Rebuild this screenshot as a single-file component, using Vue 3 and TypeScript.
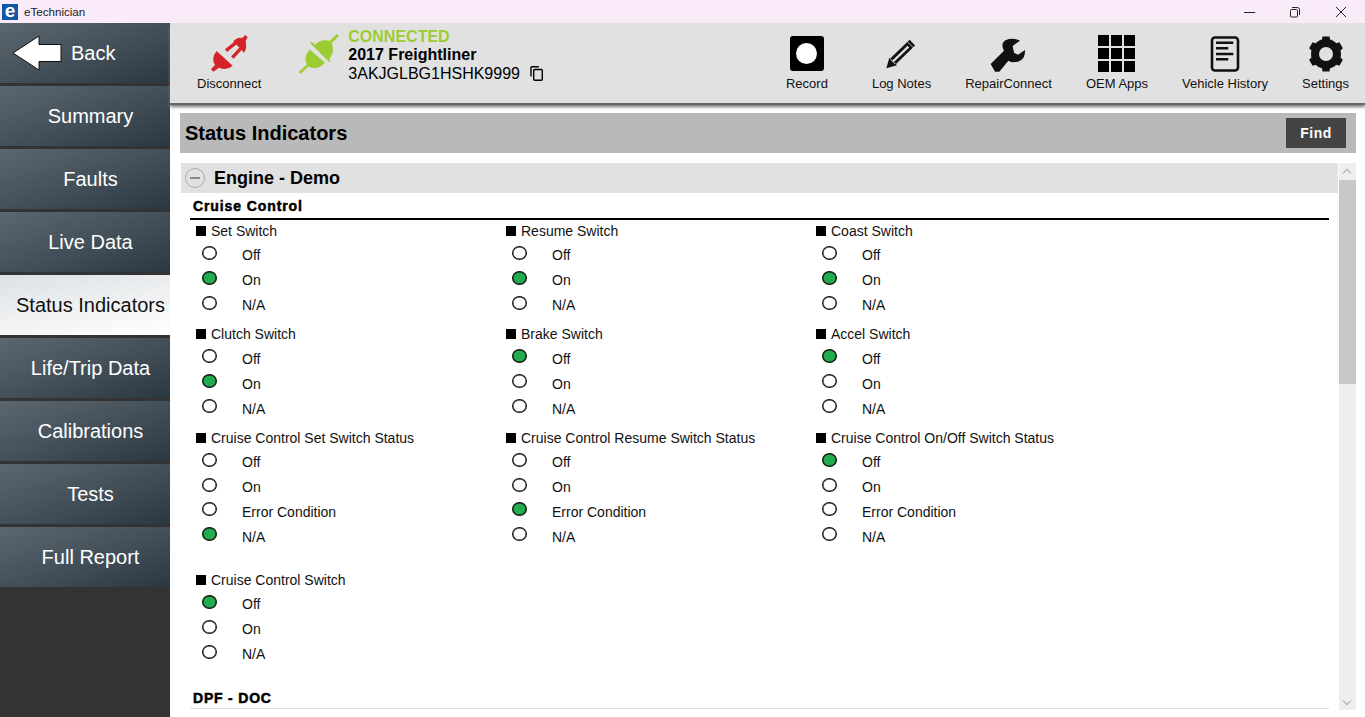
<template>
  <div class="app">
    <!-- Title bar -->
    <header class="titlebar">
      <span class="logo">e</span>
      <span class="app-name">eTechnician</span>
      <div class="win-controls">
        <svg width="12" height="12" viewBox="0 0 12 12"><path d="M1 6.500h11" stroke="#222" fill="none" /></svg>
        <svg width="12" height="12" viewBox="0 0 12 12">
          <path d="M3 1.500h5.500a2 2 0 0 1 2 2V9M1.500 4.500a1 1 0 0 1 1-1h5a1 1 0 0 1 1 1v5.500a1 1 0 0 1-1 1h-5a1 1 0 0 1-1-1z" stroke="#222" fill="none" />
        </svg>
        <svg width="12" height="12" viewBox="0 0 12 12"><path d="M1 1l10 10M11 1L1 11" stroke="#222" fill="none" /></svg>
      </div>
    </header>

    <div class="body">
      <!-- Side navigation -->
      <nav class="sidebar">
        <div class="nav-item back">
          <svg class="back-arrow" width="50" height="36" viewBox="0 0 50 36">
            <path d="M1 18L27 1v8.500h22v17H27V35z" fill="#fff" stroke="#111" stroke-width="1" />
          </svg>
          <span>Back</span>
        </div>
        <div v-for="item in navItems" :key="item" class="nav-item" :class="{ active: item === 'Status Indicators' }">
          {{ item }}
        </div>
      </nav>

      <main class="main">
        <!-- Toolbar -->
        <div class="toolbar">
          <div class="tool disconnect">
            <svg width="40" height="40" viewBox="627 96 120 120" fill="#d4242a">
              <path d="M700 124L732 158Q742 145 737 122L743 112L736 105L726 114Q712 110 700 124z" />
              <path d="M708 128L678 152M722 146L697 173" stroke="#d4242a" stroke-width="10" fill="none" />
              <path d="M650 153L698 197Q680 213 657 203L640 215L633 208L645 195Q632 175 650 153z" />
            </svg>
            <span class="tool-label">Disconnect</span>
          </div>

          <div class="connection">
            <svg class="plug" width="43" height="43" viewBox="320 10 130 130" fill="#9ccc32">
              <path d="M372 48Q392 26 418 34L441 13L447 19L425 41Q436 66 416 92z" />
              <path d="M362 38L420 96" stroke="#9ccc32" stroke-width="6" fill="none" />
              <path d="M358 60Q338 85 350 105L325 128L330 134L355 111Q380 125 405 100z" />
            </svg>
            <div class="conn-text">
              <div class="conn-state">CONNECTED</div>
              <div class="conn-vehicle">2017 Freightliner</div>
              <div class="conn-vin">
                3AKJGLBG1HSHK9999
                <svg class="copy-icon" width="14" height="15" viewBox="0 0 14 15" fill="none" stroke="#000" stroke-width="1.400">
                  <path d="M1 10.500V1.500a.8.800 0 0 1 .8-.8h7" />
                  <rect x="3.700" y="3.500" width="8.600" height="10.800" rx="1" />
                </svg>
              </div>
            </div>
          </div>

          <div class="tools-right">
            <div class="tool record-tool">
              <span class="record-box"><span class="record-dot"></span></span>
              <span class="tool-label">Record</span>
            </div>
            <div class="tool">
              <svg width="36" height="36" viewBox="11 18 108 108">
                <path d="M38 94L96 38" stroke="#111" stroke-width="24" fill="none" />
                <path d="M36 96L84 50" stroke="#e1e1e1" stroke-width="7" fill="none" />
                <path d="M18 115L27 83L50 106z" fill="#111" />
                <path d="M31 88L45 102" stroke="#e1e1e1" stroke-width="3" fill="none" />
                <path d="M78 32L101 55" stroke="#e1e1e1" stroke-width="2.500" fill="none" />
              </svg>
              <span class="tool-label">Log Notes</span>
            </div>
            <div class="tool">
              <svg width="40" height="36" viewBox="327 18 120 108" fill="#111">
                <path d="M332 102L372 62Q360 40 378 30Q398 22 420 32L398 48L402 68L414 74L435 60Q436 85 420 92Q400 102 385 92L358 125H345z" />
              </svg>
              <span class="tool-label">RepairConnect</span>
            </div>
            <div class="tool">
              <div class="apps-grid">
                <span v-for="n in 9" :key="n"></span>
              </div>
              <span class="tool-label">OEM Apps</span>
            </div>
            <div class="tool">
              <svg width="30" height="36" viewBox="0 0 30 36" fill="none" stroke="#111">
                <rect x="2" y="1.500" width="26" height="33" rx="3" stroke-width="2.600" />
                <path d="M6 6.700h17.300M6 12.300h12.300M6 18h17.300M6 23.300h12.300" stroke-width="2.400" />
              </svg>
              <span class="tool-label">Vehicle History</span>
            </div>
            <div class="tool settings-tool">
              <svg width="34" height="36" viewBox="0 0 34 36" fill="#111">
                <circle cx="17" cy="18" r="11" fill="none" stroke="#111" stroke-width="8" />
                <path v-for="a in gearTeeth" :key="a" d="M12.500 6L13.500 .500H20.500L21.500 6z" :transform="`rotate(${a} 17 18)`" />
              </svg>
              <span class="tool-label">Settings</span>
            </div>
          </div>
        </div>

        <div class="page">
          <div class="page-head">
            <h1>Status Indicators</h1>
            <button class="find-btn">Find</button>
          </div>

          <div class="panel">
            <div class="panel-content">
              <div class="module-head">
                <span class="collapse"><span></span></span>
                <h2>Engine - Demo</h2>
              </div>

              <h3 class="section-title">Cruise Control</h3>
              <div class="indicator-grid">
                <div v-for="g in groups" :key="g.name" class="indicator" :class="{ wide: g.options.length === 4 }">
                  <div class="indicator-name"><i></i>{{ g.name }}</div>
                  <div class="options">
                    <div v-for="opt in g.options" :key="opt" class="option">
                      <span class="led" :class="{ on: opt === g.value }"></span>
                      <span>{{ opt }}</span>
                    </div>
                  </div>
                </div>
              </div>

              <h3 class="section-title second">DPF - DOC</h3>
            </div>

            <div class="scrollbar">
              <span class="arrow up"></span>
              <div class="thumb"></div>
              <span class="arrow down"></span>
            </div>
          </div>
        </div>
      </main>
    </div>
  </div>
</template>

<script setup lang="ts">
interface Group {
  name: string;
  options: string[];
  value: string;
}

const navItems = [
  "Summary",
  "Faults",
  "Live Data",
  "Status Indicators",
  "Life/Trip Data",
  "Calibrations",
  "Tests",
  "Full Report",
];

const gearTeeth = [0, 60, 120, 180, 240, 300];

const basic = ["Off", "On", "N/A"];
const withError = ["Off", "On", "Error Condition", "N/A"];

const groups: Group[] = [
  { name: "Set Switch", options: basic, value: "On" },
  { name: "Resume Switch", options: basic, value: "On" },
  { name: "Coast Switch", options: basic, value: "On" },
  { name: "Clutch Switch", options: basic, value: "On" },
  { name: "Brake Switch", options: basic, value: "Off" },
  { name: "Accel Switch", options: basic, value: "Off" },
  { name: "Cruise Control Set Switch Status", options: withError, value: "N/A" },
  { name: "Cruise Control Resume Switch Status", options: withError, value: "Error Condition" },
  { name: "Cruise Control On/Off Switch Status", options: withError, value: "Off" },
  { name: "Cruise Control Switch", options: basic, value: "Off" },
];
</script>

<style>
html,
body {
  margin: 0;
  background: #fff;
  overflow: hidden;
}
</style>

<style scoped>
.app {
  width: 1365px;
  height: 717px;
  display: flex;
  flex-direction: column;
  font-family: "Liberation Sans", Arial, sans-serif;
  color: #000;
  overflow: hidden;
}

.titlebar {
  height: 23px;
  flex: none;
  display: flex;
  align-items: center;
  background: #f9ebf8;
  padding-left: 2px;
  font-size: 11.600px;
  color: #222;
}

.logo {
  width: 16px;
  height: 16px;
  background: #0f58a8;
  color: #fff;
  font-size: 19px;
  font-weight: 700;
  line-height: 14px;
  text-align: center;
  margin-right: 6px;
}

.win-controls {
  margin-left: auto;
  display: flex;
  gap: 34px;
  padding-right: 18px;
}

.body {
  flex: 1;
  display: flex;
  min-height: 0;
}

.sidebar {
  width: 170px;
  flex: none;
  background: #333;
  display: flex;
  flex-direction: column;
  gap: 3px;
}

.nav-item {
  height: 60px;
  flex: none;
  display: flex;
  align-items: center;
  justify-content: center;
  padding-left: 11px;
  color: #fff;
  font-size: 20px;
  background: linear-gradient(160deg, #5c666f 0%, #47535c 45%, #2a3842 100%);
}

.nav-item.active {
  color: #111;
  background: linear-gradient(170deg, #dde1e4 0%, #ffffff 100%);
}

.nav-item.back {
  justify-content: flex-start;
  padding-left: 12px;
}

.back-arrow {
  margin-right: 9px;
}

.main {
  flex: 1;
  min-width: 0;
  display: flex;
  flex-direction: column;
}

.toolbar {
  height: 80px;
  flex: none;
  display: flex;
  background: #e1e1e1;
  box-shadow: 0 2px 0 #6a6666, 0 4px 3px #777;
  position: relative;
}

.tool {
  display: flex;
  flex-direction: column;
  align-items: center;
  justify-content: flex-end;
  height: 69px;
  padding: 0 17px;
  gap: 4px;
  box-sizing: border-box;
}

.tool-label {
  font-size: 13px;
  line-height: 16px;
  color: #111;
}

.disconnect {
  padding: 0 0 0 27px;
}

.settings-tool {
  padding-right: 16px;
}

.connection {
  display: flex;
  margin-left: 36px;
}

.plug {
  margin-top: 10px;
  margin-right: 8px;
}

.conn-text {
  padding-top: 5px;
  font-size: 16px;
  line-height: 19px;
}

.conn-state {
  font-weight: 700;
  color: #9ccc32;
  line-height: 18px;
}

.conn-vehicle {
  font-weight: 700;
  line-height: 18px;
}

.conn-vin {
  display: flex;
  align-items: center;
  line-height: 19px;
}

.copy-icon {
  margin-left: 10px;
}

.tools-right {
  margin-left: auto;
  display: flex;
}

.record-tool {
  margin-right: 10px;
}

.record-box {
  width: 34px;
  height: 35px;
  margin-bottom: 1px;
  background: #000;
  border-radius: 3px;
  display: flex;
  align-items: center;
  justify-content: center;
}

.record-dot {
  width: 21px;
  height: 21px;
  background: #fff;
  border-radius: 50%;
}

.apps-grid {
  display: grid;
  grid-template-columns: repeat(3, 11px);
  grid-auto-rows: 11px;
  gap: 2px;
}

.apps-grid span {
  background: #000;
}

.page {
  flex: 1;
  min-height: 0;
  padding: 10px 9px 7px 10px;
  display: flex;
  flex-direction: column;
  gap: 10px;
}

.page-head {
  height: 40px;
  flex: none;
  display: flex;
  align-items: center;
  justify-content: space-between;
  background: #b9b9b9;
  padding: 0 10px 0 5px;
}

.page-head h1 {
  margin: 0;
  font-size: 20px;
  font-weight: 700;
}

.find-btn {
  width: 60px;
  height: 30px;
  border: none;
  background: #444;
  color: #fff;
  letter-spacing: 0.5px;
  font: 700 14px "Liberation Sans", Arial, sans-serif;
}

.panel {
  flex: 1;
  min-height: 0;
  display: flex;
  gap: 1px;
  padding-left: 1px;
}

.panel-content {
  flex: 1;
  min-width: 0;
  overflow: hidden;
}

.module-head {
  height: 30px;
  display: flex;
  align-items: center;
  background: #e1e1e1;
  padding-left: 4px;
}

.module-head h2 {
  margin: 0 0 0 9px;
  font-size: 18px;
  font-weight: 700;
}

.collapse {
  width: 18px;
  height: 18px;
  border: 1px solid #aaa;
  border-radius: 50%;
  display: flex;
  align-items: center;
  justify-content: center;
}

.collapse span {
  width: 10px;
  height: 2px;
  background: #888;
}

.section-title {
  margin: 5px 9px 0 9px;
  padding: 0 0 3px 3px;
  height: 17px;
  line-height: 17px;
  font-size: 14px;
  font-weight: 700;
  letter-spacing: 0.9px;
  -webkit-text-stroke: 0.5px #000;
  border-bottom: 2px solid #000;
}

.section-title.second {
  margin-top: 17px;
  border-bottom: 1px solid #ddd;
  padding-bottom: 0.500px;
  letter-spacing: 0.8px;
}

.indicator-grid {
  display: grid;
  grid-template-columns: repeat(3, 310px);
  padding: 1px 0 0 15px;
}

.indicator {
  padding-bottom: 6.700px;
}

.indicator.wide {
  padding-bottom: 20.500px;
}

.indicator-name {
  height: 20px;
  line-height: 20px;
  font-size: 14px;
  color: #111;
  display: flex;
  align-items: center;
}

.indicator-name i {
  width: 10px;
  height: 10px;
  background: #000;
  margin-right: 5px;
}

.options {
  margin-top: 2px;
}

.option {
  height: 24.900px;
  display: flex;
  align-items: center;
  font-size: 14px;
  color: #111;
}

.led {
  width: 13px;
  height: 12px;
  margin: -5px 25px 0 6px;
  border: 1px solid #111;
  box-shadow: inset 0 0 0 0.5px #111;
  border-radius: 50%;
  background: #fff;
  flex: none;
}

.led.on {
  background: #22ac4e;
}

.scrollbar {
  width: 17px;
  flex: none;
  background: #eee;
  position: relative;
}

.thumb {
  position: absolute;
  top: 17px;
  left: 0;
  right: 0;
  height: 204px;
  background: #c8c8c8;
}

.arrow {
  position: absolute;
  left: 5px;
  width: 5px;
  height: 5px;
  border-left: 1.500px solid #aaa;
  border-top: 1.500px solid #aaa;
}

.arrow.up {
  top: 7px;
  transform: rotate(45deg);
}

.arrow.down {
  bottom: 6px;
  transform: rotate(225deg);
}
</style>
